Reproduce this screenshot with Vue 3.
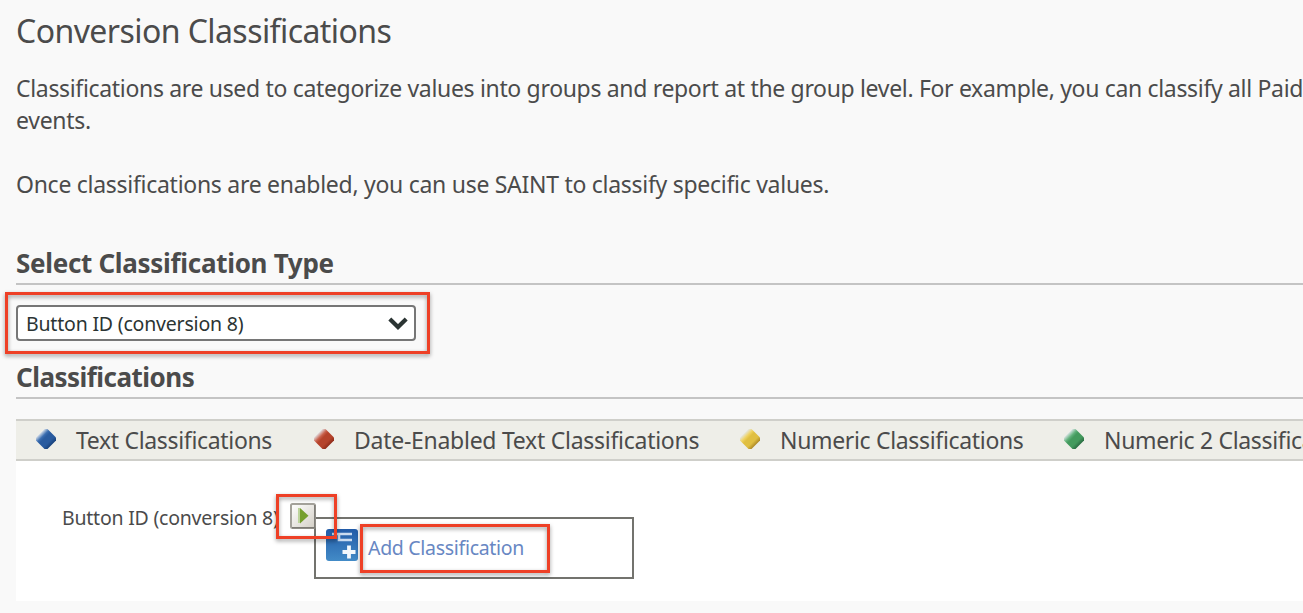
<script setup>
const legend = [
  { id: 'text', label: 'Text Classifications', light: '#3a6db0', dark: '#163f78', base: '#295b9f' },
  { id: 'date', label: 'Date-Enabled Text Classifications', light: '#c8604a', dark: '#8c2a18', base: '#b5432b' },
  { id: 'numeric', label: 'Numeric Classifications', light: '#efd25e', dark: '#a98424', base: '#e0bf41' },
  { id: 'numeric2', label: 'Numeric 2 Classifications', light: '#5fb07a', dark: '#27683f', base: '#439a5d' },
]
</script>

<template>
  <main class="page">
    <h1 class="title">Conversion Classifications</h1>
    <p class="intro">
      <span class="wide">Classifications are used to categorize values into groups and report at the group level. For example, you can classify all Paid</span><br>events.
    </p>
    <p class="intro note">Once classifications are enabled, you can use SAINT to classify specific values.</p>

    <h2 class="heading">Select Classification Type</h2>
    <div class="picker">
      <div class="select" role="combobox">
        <span>Button ID (conversion 8)</span>
        <svg class="chevron" width="20" height="14" viewBox="0 0 20 14">
          <path d="M1.8 3 L10 11 L18.2 3" fill="none" stroke="#2b3433" stroke-width="4.2" />
        </svg>
      </div>
      <div class="mark mark-select"></div>
    </div>

    <h2 class="heading tight">Classifications</h2>
    <section class="panel">
      <ul class="legend">
        <li v-for="item in legend" :key="item.id" :class="item.id">
          <svg width="20" height="20" viewBox="0 0 20 20">
            <defs>
              <linearGradient :id="'shade-' + item.id" x1="0.2" y1="0.2" x2="0.8" y2="0.8">
                <stop offset="0" stop-color="#e4e9ee" />
                <stop offset="0.26" :stop-color="item.light" />
                <stop offset="0.4" :stop-color="item.base" />
                <stop offset="0.74" :stop-color="item.base" />
                <stop offset="1" :stop-color="item.dark" />
              </linearGradient>
            </defs>
            <path d="M8.5 0h3L20 8.5v3L11.5 20h-3L0 11.5v-3z" :fill="`url(#shade-${item.id})`" />
          </svg>
          <span>{{ item.label }}</span>
        </li>
      </ul>
      <div class="tree">
        <span class="node">Button ID (conversion 8)</span>
        <div class="trigger">
          <div class="menu">
            <svg class="add" width="32" height="32" viewBox="0 0 32 32">
              <defs>
                <linearGradient id="add-bg" x1="0" y1="0" x2="0" y2="1">
                  <stop offset="0" stop-color="#225ba8" />
                  <stop offset="1" stop-color="#438bc7" />
                </linearGradient>
              </defs>
              <rect width="32" height="32" rx="3" fill="url(#add-bg)" />
              <path d="M6 5H26M13 5V11H26" fill="none" stroke="#cbdcf0" stroke-width="2.6" />
              <path d="M23 16.5v13M16.5 23h13" stroke="#f3f8fc" stroke-width="3.8" />
            </svg>
            <a class="link">Add Classification</a>
            <div class="mark mark-link"></div>
          </div>
          <svg class="play" width="26" height="26" viewBox="0 0 26 26">
            <defs>
              <linearGradient id="play-bg" x1="0" y1="0" x2="1" y2="1">
                <stop offset="0" stop-color="#ffffff" />
                <stop offset="1" stop-color="#d3cfc6" />
              </linearGradient>
            </defs>
            <rect x="1" y="1" width="24" height="24" rx="1.5" fill="url(#play-bg)" stroke="#a3a19a" stroke-width="2" />
            <path d="M2 24.8H24.8V2" fill="none" stroke="#7d7b75" stroke-width="1.4" />
            <path d="M9 5v15" stroke="#bcd39b" stroke-width="2" />
            <path d="M10 5L18.5 12.7L10 20.5z" fill="#759f2d" />
          </svg>
          <div class="mark mark-trigger"></div>
        </div>
      </div>
    </section>
  </main>
</template>

<style>
body {
  background: #f9f9f9;
  overflow: hidden;
}
</style>

<style scoped>
.page {
  box-sizing: border-box;
  height: 613px;
  padding: 11px 0 0 16px;
  overflow: hidden;
  color: #4b4b4b;
  font-family: "Noto Sans", "Open Sans", sans-serif;
  white-space: nowrap;
}
.title {
  margin: 0 0 21px;
  font-size: 32px;
  line-height: 39px;
  padding-bottom: 1px;
  font-weight: 400;
  letter-spacing: -0.57px;
}
.intro {
  margin: 0;
  font-size: 23px;
  line-height: 32px;
  letter-spacing: -0.28px;
}
.wide {
  letter-spacing: -0.33px;
}
.note {
  margin: 32px 0 47px;
}
.heading {
  margin: 0 0 20px;
  padding-bottom: 4px;
  border-bottom: 2px solid #c4c4c4;
  font-size: 26px;
  line-height: 32px;
  font-weight: 700;
  letter-spacing: -0.3px;
}
.heading.tight {
  letter-spacing: -0.52px;
}
.picker {
  position: relative;
  width: 400px;
  margin-bottom: 20px;
}
.select {
  box-sizing: border-box;
  display: flex;
  align-items: center;
  justify-content: space-between;
  height: 36px;
  padding: 0 6px 0 8px;
  border: 2px solid #767676;
  border-radius: 4px;
  background: #fff;
  color: #2b3433;
  font-size: 19.5px;
  line-height: 32px;
  letter-spacing: -0.19px;
}
.select span {
  padding-top: 2px;
}
.mark {
  position: absolute;
  box-sizing: border-box;
  border: 3px solid #ee4026;
  filter: drop-shadow(0 2px 2px rgba(0, 0, 0, 0.4));
  pointer-events: none;
}
.mark-select {
  left: -11px;
  top: -13px;
  width: 425px;
  height: 62px;
}
.panel {
  height: 182px;
  background: #fff;
}
.legend {
  box-sizing: border-box;
  display: grid;
  grid-template-columns: 278px 426px 324px 320px;
  height: 42px;
  margin: 0;
  padding: 0 0 0 20px;
  border-top: 2px solid #cfcfca;
  border-bottom: 2px solid #cfcfca;
  background: #eeeee8;
  list-style: none;
  font-size: 23px;
  line-height: 38px;
  letter-spacing: -0.33px;
}
.legend li {
  display: flex;
  gap: 20px;
}
.legend svg {
  margin-top: 8px;
}
.legend .date {
  letter-spacing: -0.27px;
}
.tree {
  display: flex;
  padding: 42px 0 0 46px;
}
.node {
  width: 228px;
  padding-top: 1px;
  font-size: 19.5px;
  line-height: 28px;
  letter-spacing: -0.22px;
}
.trigger {
  position: relative;
  width: 26px;
  height: 26px;
}
.play {
  position: relative;
  display: block;
}
.menu {
  position: absolute;
  left: 24px;
  top: 14px;
  box-sizing: border-box;
  display: flex;
  gap: 10px;
  width: 320px;
  height: 62px;
  padding: 10px;
  border: 2px solid #73736e;
  background: #fff;
}
.link {
  color: #6887c3;
  font-size: 19.5px;
  line-height: 37px;
  letter-spacing: -0.3px;
}
.mark-link {
  left: 44px;
  top: 5px;
  width: 190px;
  height: 49px;
}
.mark-trigger {
  left: -14px;
  top: -9px;
  width: 61px;
  height: 45px;
}
</style>
